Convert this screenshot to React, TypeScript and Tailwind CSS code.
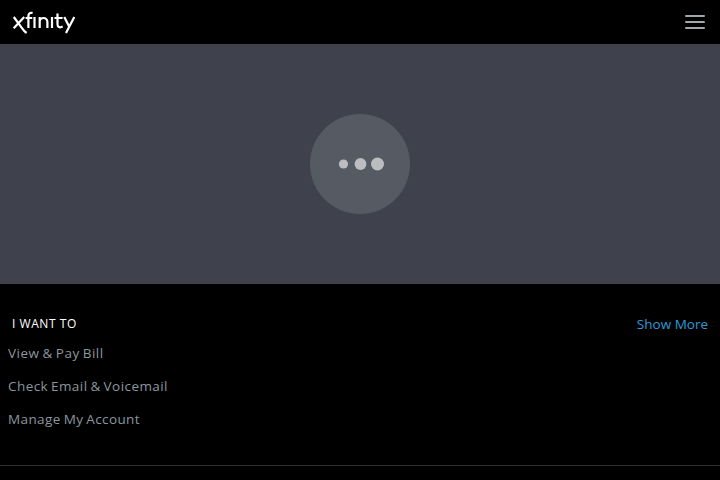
const actions = [
  { label: 'View & Pay Bill', tracking: 'tracking-[0.5px]' },
  { label: 'Check Email & Voicemail', tracking: 'tracking-[0.43px]' },
  { label: 'Manage My Account', tracking: 'tracking-[0.4px]' },
];

function Logo() {
  return (
    <svg width="64" height="24" viewBox="12 11 64 24" fill="none" stroke="#fff" strokeWidth="2.2" aria-label="xfinity">
      <path d="M13.8 17 L21.6 27.6 C23.4 30.2 24.8 31.9 26.6 33 M24.2 17 L13.7 28.2" />
      <path d="M32.6 13 C29.5 12.2 28.4 14 28.4 16.2 V28 M25.6 18 H32.3" />
      <path d="M34.5 17 V28 M52 17 V28" />
      <path d="M39.7 28 V17 M39.7 21.6 C39.8 17 47.4 16.5 47.4 22 V28" />
      <path d="M57.5 13.5 V24.2 C57.5 27.3 59.6 28 62.7 26.6 M54.5 18 H62.6" />
      <path d="M64.3 17 L69.5 27.2 M74.3 17 L66 33" />
    </svg>
  );
}

export default function App() {
  return (
    <div className="h-[480px] w-full overflow-hidden bg-black font-['Open_Sans',sans-serif]">
      <header className="flex h-11 items-center justify-between pl-3 pr-[15px] pt-px">
        <Logo />
        <button aria-label="Menu" className="mt-[-2px] flex w-5 flex-col gap-1">
          <span className="h-0.5 rounded-[1px] bg-[#a0a8ae]" />
          <span className="h-0.5 rounded-[1px] bg-[#a0a8ae]" />
          <span className="h-0.5 rounded-[1px] bg-[#a0a8ae]" />
        </button>
      </header>
      <section className="flex h-60 items-center justify-center bg-[#3f414d]">
        <div className="flex size-[100px] items-center justify-center rounded-full bg-[#565a63]">
          <svg width="100" height="100" fill="#bcbdc1">
            <circle cx="33.5" cy="50" r="4.6" />
            <circle cx="50.5" cy="50" r="5.9" />
            <circle cx="67.5" cy="50" r="6.5" />
          </svg>
        </div>
      </section>
      <main className="h-[182px] border-b border-[#303030] pt-[30px]">
        <div className="flex h-5 items-center justify-between pl-3 pr-3">
          <h2 className="text-[12px] leading-5 tracking-[0.55px] text-white">I WANT TO</h2>
          <a className="text-[13.5px] leading-5 tracking-[0px] text-[#2b9cd8]">Show More</a>
        </div>
        <ul className="mt-[3px] pl-2">
          {actions.map((a) => (
            <li key={a.label} className="flex h-[33px] items-center text-[13.5px] text-[#8b969e] [word-spacing:-1px]">
              <span className={a.tracking}>{a.label}</span>
            </li>
          ))}
        </ul>
      </main>
    </div>
  );
}
